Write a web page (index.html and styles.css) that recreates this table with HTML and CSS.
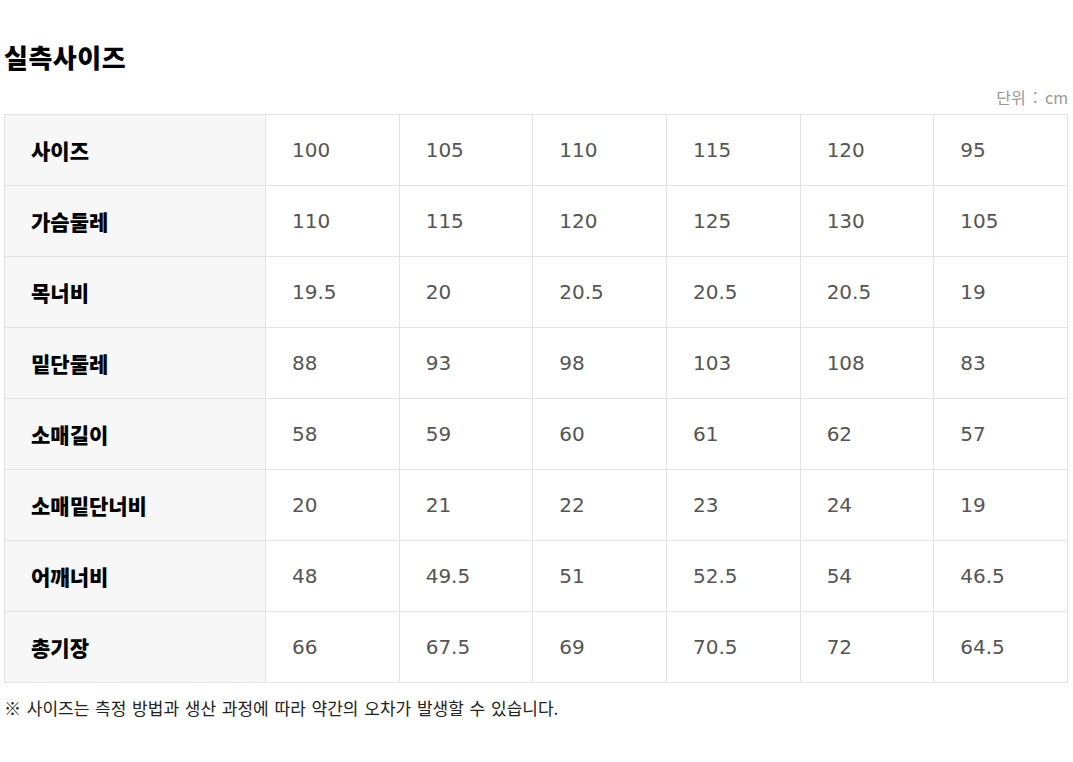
FILE: index.html
```html
<!DOCTYPE html>
<html lang="ko">
<head>
<meta charset="utf-8">
<link rel="stylesheet" href="styles.css">
</head>
<body>
<div class="wrap">
  <h2 class="title">실측사이즈</h2>
  <div class="unit">단위 : cm</div>
  <table class="size-table">
    <tr><th>사이즈</th><td>100</td><td>105</td><td>110</td><td>115</td><td>120</td><td>95</td></tr>
    <tr><th>가슴둘레</th><td>110</td><td>115</td><td>120</td><td>125</td><td>130</td><td>105</td></tr>
    <tr><th>목너비</th><td>19.5</td><td>20</td><td>20.5</td><td>20.5</td><td>20.5</td><td>19</td></tr>
    <tr><th>밑단둘레</th><td>88</td><td>93</td><td>98</td><td>103</td><td>108</td><td>83</td></tr>
    <tr><th>소매길이</th><td>58</td><td>59</td><td>60</td><td>61</td><td>62</td><td>57</td></tr>
    <tr><th>소매밑단너비</th><td>20</td><td>21</td><td>22</td><td>23</td><td>24</td><td>19</td></tr>
    <tr><th>어깨너비</th><td>48</td><td>49.5</td><td>51</td><td>52.5</td><td>54</td><td>46.5</td></tr>
    <tr><th>총기장</th><td>66</td><td>67.5</td><td>69</td><td>70.5</td><td>72</td><td>64.5</td></tr>
  </table>
  <p class="note">※ 사이즈는 측정 방법과 생산 과정에 따라 약간의 오차가 발생할 수 있습니다.</p>
</div>
</body>
</html>
```

FILE: styles.css
```css
html, body {
  margin: 0;
  padding: 0;
  background: #fff;
}
body {
  font-family: "Noto Sans CJK KR", "Noto Sans", sans-serif;
  color: #111;
}
.wrap {
  padding: 40px 5px 0 4px;
}
.title {
  margin: 0;
  font-size: 26px;
  font-weight: 900;
  line-height: 34px;
  color: #000;
  letter-spacing: 0.5px;
}
.unit {
  text-align: right;
  font-size: 16px;
  line-height: 20px;
  color: #999;
  word-spacing: 3px;
  margin-top: 13px;
  margin-bottom: 7px;
}
.size-table {
  width: 100%;
  border-collapse: collapse;
  table-layout: fixed;
}
.size-table th,
.size-table td {
  border: 1px solid #e3e3e3;
  height: 71px;
  padding: 0 0 0 26px;
  text-align: left;
  box-sizing: border-box;
}
.size-table th {
  width: 261px;
  background: #f7f7f7;
  font-size: 21px;
  font-weight: 900;
  color: #000;
}
.size-table td {
  font-family: "DejaVu Sans", sans-serif;
  font-size: 20px;
  color: #555;
}
.note {
  margin: 14px 0 0;
  font-size: 17px;
  line-height: 22px;
  word-spacing: 1px;
  color: #222;
}
```
